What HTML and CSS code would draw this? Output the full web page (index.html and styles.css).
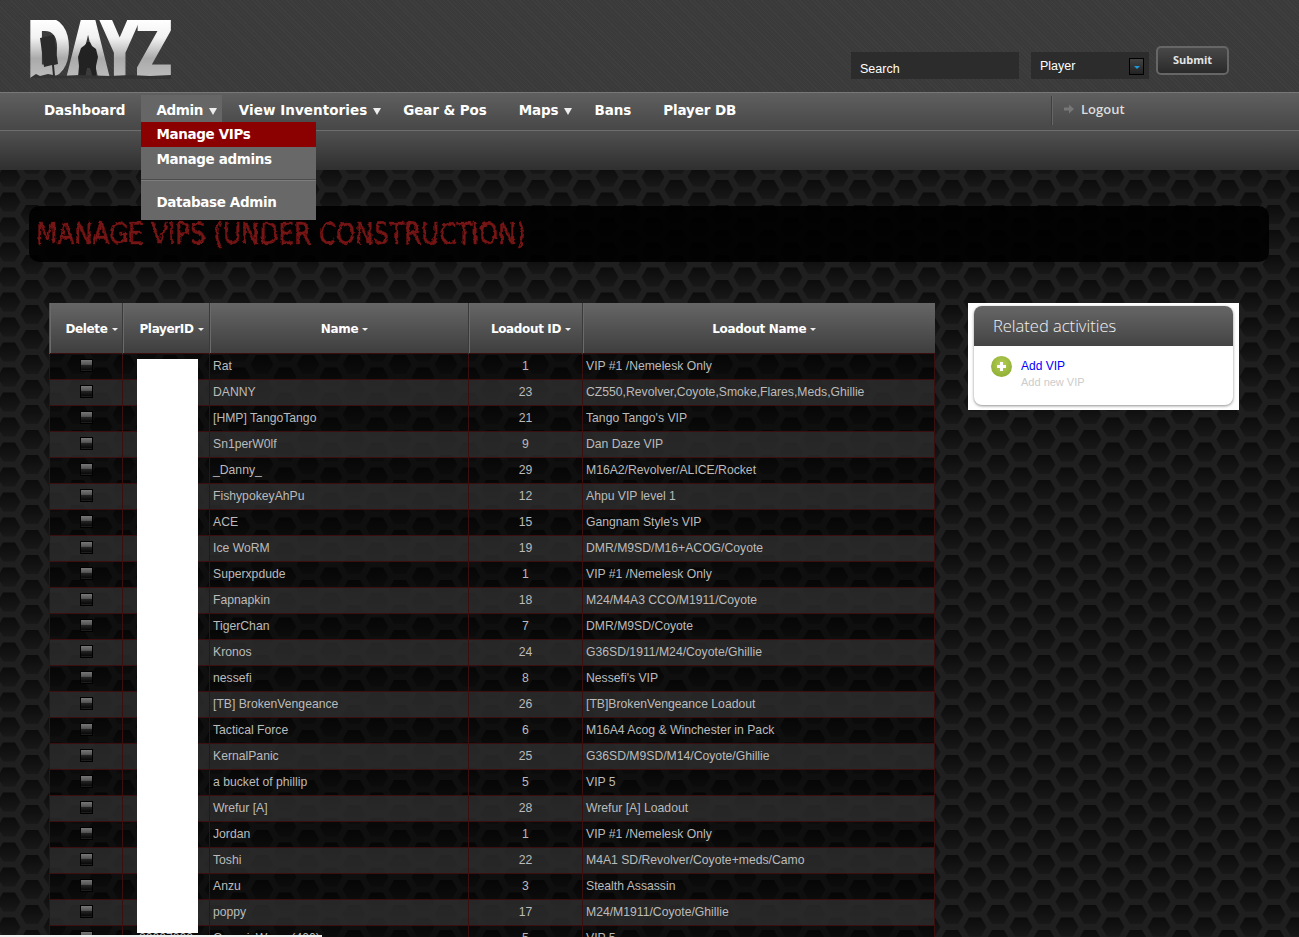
FILE: index.html
```html
<!DOCTYPE html>
<html lang="en">
<head>
    <meta charset="UTF-8">
    <title>DayZ - Manage VIPs</title>
    <link rel="stylesheet" href="styles.css">
</head>
<body>
<div class="page">
    <svg class="filters" width="0" height="0">
        <filter id="rough" x="-2%" y="-20%" width="104%" height="140%">
            <feTurbulence type="fractalNoise" baseFrequency="0.2" numOctaves="2" seed="4"/>
            <feDisplacementMap in="SourceGraphic" scale="5"/>
        </filter>
    </svg>

    <header class="top">
        <div class="logo">
            <span class="logo-text">DAYZ</span>
            <svg class="logo-art" width="141" height="59" viewBox="0 0 141 59">
                <path d="M10 18l14-3 4 29-4 1 1 11h-2l-1-11-8 2z" fill="#2b2b2b"/>
                <path d="M48 58l1-12-1-9 3-9 4-3 2-3 3 0 2 4 4 3 2 8-2 9 0 12h-3l-3-10-3 0-2 10z" fill="#222"/>
                <path d="M0 58l6-4 4 2 8-2 10 2 22-1 30 1 20-1 20 1 21-1v4z" fill="#333"/>
            </svg>
        </div>
        <form class="search">
            <input class="search-input" type="text" value="Search">
            <div class="search-select">
                <span>Player</span>
                <span class="select-btn"><i></i></span>
            </div>
            <button class="submit" type="button">Submit</button>
        </form>
    </header>

    <nav class="mainnav">
        <ul>
            <li class="nav-first"><a href="#">Dashboard</a></li>
            <li class="open has-sub">
                <a class="tight" href="#">Admin</a><i class="arrow"></i>
                <div class="dropdown">
                    <a class="active" href="#">Manage VIPs</a>
                    <a href="#">Manage admins</a>
                    <hr>
                    <a href="#">Database Admin</a>
                </div>
            </li>
            <li class="has-sub"><a class="wide" href="#">View Inventories</a><i class="arrow"></i></li>
            <li><a href="#">Gear &amp; Pos</a></li>
            <li class="has-sub"><a href="#">Maps</a><i class="arrow"></i></li>
            <li><a href="#">Bans</a></li>
            <li><a href="#">Player DB</a></li>
        </ul>
        <a class="logout" href="#">
            <svg width="10" height="10" viewBox="0 0 10 10"><path d="M0 3.5h5V0.5L10 5 5 9.500V6.500H0z" fill="#777"/></svg>
            Logout
        </a>
    </nav>
    <div class="subnav"></div>

    <div class="titlebar"><h1>MANAGE VIPS (UNDER CONSTRUCTION)</h1></div>

    <div class="content">
        <div class="table-wrap">
            <table class="vips">
                <thead>
                    <tr>
                        <th class="c-del">Delete<i class="caret"></i></th>
                        <th class="c-id">PlayerID<i class="caret"></i></th>
                        <th class="c-name">Name<i class="caret"></i></th>
                        <th class="c-lid">Loadout ID<i class="caret"></i></th>
                        <th>Loadout Name<i class="caret"></i></th>
                    </tr>
                </thead>
                <tbody>
                    <tr><td class="mid"><i class="check"></i></td><td></td><td>Rat</td><td class="mid">1</td><td>VIP #1 /Nemelesk Only</td></tr>
                    <tr><td class="mid"><i class="check"></i></td><td></td><td>DANNY</td><td class="mid">23</td><td>CZ550,Revolver,Coyote,Smoke,Flares,Meds,Ghillie</td></tr>
                    <tr><td class="mid"><i class="check"></i></td><td></td><td>[HMP] TangoTango</td><td class="mid">21</td><td>Tango Tango's VIP</td></tr>
                    <tr><td class="mid"><i class="check"></i></td><td></td><td>Sn1perW0lf</td><td class="mid">9</td><td>Dan Daze VIP</td></tr>
                    <tr><td class="mid"><i class="check"></i></td><td></td><td>_Danny_</td><td class="mid">29</td><td>M16A2/Revolver/ALICE/Rocket</td></tr>
                    <tr><td class="mid"><i class="check"></i></td><td></td><td>FishypokeyAhPu</td><td class="mid">12</td><td>Ahpu VIP level 1</td></tr>
                    <tr><td class="mid"><i class="check"></i></td><td></td><td>ACE</td><td class="mid">15</td><td>Gangnam Style's VIP</td></tr>
                    <tr><td class="mid"><i class="check"></i></td><td></td><td>Ice WoRM</td><td class="mid">19</td><td>DMR/M9SD/M16+ACOG/Coyote</td></tr>
                    <tr><td class="mid"><i class="check"></i></td><td></td><td>Superxpdude</td><td class="mid">1</td><td>VIP #1 /Nemelesk Only</td></tr>
                    <tr><td class="mid"><i class="check"></i></td><td></td><td>Fapnapkin</td><td class="mid">18</td><td>M24/M4A3 CCO/M1911/Coyote</td></tr>
                    <tr><td class="mid"><i class="check"></i></td><td></td><td>TigerChan</td><td class="mid">7</td><td>DMR/M9SD/Coyote</td></tr>
                    <tr><td class="mid"><i class="check"></i></td><td></td><td>Kronos</td><td class="mid">24</td><td>G36SD/1911/M24/Coyote/Ghillie</td></tr>
                    <tr><td class="mid"><i class="check"></i></td><td></td><td>nessefi</td><td class="mid">8</td><td>Nessefi's VIP</td></tr>
                    <tr><td class="mid"><i class="check"></i></td><td></td><td>[TB] BrokenVengeance</td><td class="mid">26</td><td>[TB]BrokenVengeance Loadout</td></tr>
                    <tr><td class="mid"><i class="check"></i></td><td></td><td>Tactical Force</td><td class="mid">6</td><td>M16A4 Acog &amp; Winchester in Pack</td></tr>
                    <tr><td class="mid"><i class="check"></i></td><td></td><td>KernalPanic</td><td class="mid">25</td><td>G36SD/M9SD/M14/Coyote/Ghillie</td></tr>
                    <tr><td class="mid"><i class="check"></i></td><td></td><td>a bucket of phillip</td><td class="mid">5</td><td>VIP 5</td></tr>
                    <tr><td class="mid"><i class="check"></i></td><td></td><td>Wrefur [A]</td><td class="mid">28</td><td>Wrefur [A] Loadout</td></tr>
                    <tr><td class="mid"><i class="check"></i></td><td></td><td>Jordan</td><td class="mid">1</td><td>VIP #1 /Nemelesk Only</td></tr>
                    <tr><td class="mid"><i class="check"></i></td><td></td><td>Toshi</td><td class="mid">22</td><td>M4A1 SD/Revolver/Coyote+meds/Camo</td></tr>
                    <tr><td class="mid"><i class="check"></i></td><td></td><td>Anzu</td><td class="mid">3</td><td>Stealth Assassin</td></tr>
                    <tr><td class="mid"><i class="check"></i></td><td></td><td>poppy</td><td class="mid">17</td><td>M24/M1911/Coyote/Ghillie</td></tr>
                    <tr><td class="mid"><i class="check"></i></td><td class="mid">20007000</td><td>GenericWorm (400)</td><td class="mid">5</td><td>VIP 5</td></tr>
                </tbody>
            </table>
            <div class="redact"></div>
        </div>

        <aside class="related">
            <div class="related-card">
                <h2>Related activities</h2>
                <div class="related-body">
                    <span class="plus"></span>
                    <div>
                        <a href="#">Add VIP</a>
                        <p>Add new VIP</p>
                    </div>
                </div>
            </div>
        </aside>
    </div>
    <div class="bottom-strip"></div>
</div>
</body>
</html>
```
FILE: styles.css
```css
html, body {
    margin: 0;
    padding: 0;
    height: 937px;
    overflow: hidden;
}

body {
    font-family: "Liberation Sans", Arial, sans-serif;
    font-size: 12.200px;
    color: #bbb;
    background-color: #1f1f1f;
    background-image: url("data:image/svg+xml,%3Csvg xmlns='http://www.w3.org/2000/svg' width='46' height='25'%3E%3Cdefs%3E%3ClinearGradient id='g' x1='0' y1='0' x2='0' y2='1'%3E%3Cstop offset='0' stop-color='%230c0c0c'/%3E%3Cstop offset='1' stop-color='%23181818'/%3E%3C/linearGradient%3E%3Cpath id='h' d='M-6-9.500H6L11.500 0 6 9.500H-6L-11.500 0z' fill='url(%23g)'/%3E%3C/defs%3E%3Cuse href='%23h' x='9' y='2'/%3E%3Cuse href='%23h' x='9' y='27'/%3E%3Cuse href='%23h' x='55' y='2'/%3E%3Cuse href='%23h' x='55' y='27'/%3E%3Cuse href='%23h' x='32' y='14.500'/%3E%3C/svg%3E");
}

.page {
    position: relative;
    height: 937px;
    overflow: hidden;
}

.filters {
    position: absolute;
}

/* header */
.top {
    display: flex;
    justify-content: space-between;
    height: 92px;
    background-color: #3a3a3a;
    background-image: repeating-linear-gradient(45deg, rgba(255,255,255,.025) 0 1px, transparent 1px 3px);
}

.logo {
    position: relative;
    width: 141px;
    height: 59px;
    margin: 20px 0 0 30px;
}

.logo-text {
    display: inline-block;
    margin-left: -4px;
    font-family: "DejaVu Sans", sans-serif;
    font-weight: bold;
    font-size: 80px;
    line-height: 59px;
    letter-spacing: -6px;
    transform: scaleX(.68);
    transform-origin: 0 0;
    background: linear-gradient(#fff 0, #f2f2f2 30%, #aaa 65%, #bdbdbd 100%);
    -webkit-background-clip: text;
    background-clip: text;
    color: transparent;
    -webkit-text-stroke: 2px transparent;
}

.logo-art {
    position: absolute;
    left: 0;
    top: 0;
}

.search {
    display: flex;
    align-items: flex-start;
    margin: 46px 70px 0 0;
}

.search-input {
    box-sizing: border-box;
    width: 168px;
    height: 27px;
    margin-top: 6px;
    padding: 7px 9px 0;
    border: 0;
    background: #2c2c2c;
    color: #fff;
    font-family: "Liberation Sans", Arial, sans-serif;
    font-size: 12.500px;
}

.search-select {
    box-sizing: border-box;
    display: flex;
    justify-content: space-between;
    align-items: center;
    width: 118px;
    height: 27px;
    margin: 6px 7px 0 12px;
    padding: 0 5px 0 9px;
    background: #2c2c2c;
    color: #fff;
    font-size: 12.500px;
}

.select-btn {
    box-sizing: border-box;
    display: flex;
    align-items: center;
    justify-content: center;
    width: 15px;
    height: 17px;
    margin-top: 1px;
    border: 1px solid #000;
    background: linear-gradient(#444, #222);
}

.select-btn i {
    margin-top: 3px;
    border-top: 3px solid #1e9ade;
    border-left: 3px solid transparent;
    border-right: 3px solid transparent;
}

.submit {
    box-sizing: border-box;
    width: 73px;
    height: 29px;
    padding: 0 0 2px;
    border: 2px solid #666;
    border-radius: 5px;
    background: linear-gradient(#484848, #2a2a2a);
    color: #e4e4e4;
    font-family: "Open Sans", sans-serif;
    font-size: 11px;
    font-weight: 700;
}

/* nav */
.mainnav {
    display: flex;
    justify-content: space-between;
    height: 37px;
    border-top: 1px solid #777;
    background: linear-gradient(#5f5f5f, #474747);
}

.mainnav ul {
    display: flex;
    gap: 2px;
    margin: 0;
    padding: 2px 0 0 29px;
    list-style: none;
    font-family: "DejaVu Sans", Verdana, sans-serif;
    font-weight: bold;
    font-size: 13.500px;
    letter-spacing: -.1px;
}

.mainnav li {
    position: relative;
    height: 27px;
    padding: 5px 15px 0;
    box-sizing: border-box;
    line-height: 20px;
    white-space: nowrap;
}

.mainnav li.has-sub {
    padding-right: 5px;
}

.mainnav li.nav-first {
    padding-right: 14px;
}

.mainnav li.open {
    background: #666;
}

.mainnav a {
    color: #fff;
    text-decoration: none;
}

.mainnav a.tight {
    letter-spacing: -.4px;
}

.mainnav a.wide {
    letter-spacing: .05px;
}

.arrow {
    display: inline-block;
    margin-left: 6px;
    border-top: 7px solid #eee;
    border-left: 4.500px solid transparent;
    border-right: 4.500px solid transparent;
}

.dropdown {
    position: absolute;
    z-index: 5;
    left: 0;
    top: 27px;
    width: 175px;
    height: 98px;
    background: #686868;
    letter-spacing: -.35px;
}

.dropdown a {
    display: block;
    height: 25px;
    padding-left: 15px;
    line-height: 25px;
}

.dropdown a.active {
    background: #8b0000;
}

.dropdown hr {
    height: 1px;
    margin: 7px 0 9px;
    border: 0;
    border-top: 1px solid #4c4c4c;
    background: #7c7c7c;
}

.logout {
    box-sizing: border-box;
    display: flex;
    align-items: center;
    gap: 7px;
    width: 248px;
    height: 29px;
    margin-top: 3px;
    padding: 0 0 3px 12px;
    border-left: 1px solid #3f3f3f;
    box-shadow: inset 1px 0 0 #666;
    font-family: "Open Sans", sans-serif;
    font-size: 13px;
    font-weight: 600;
}

.mainnav .logout {
    color: #ddd;
}

.subnav {
    height: 39px;
    border-top: 1px solid #6e6e6e;
    background: linear-gradient(#505050, #2f2f2f);
}

/* title */
.titlebar {
    height: 56px;
    margin: 36px 30px 41px 29px;
    border-radius: 10px;
    background: rgba(0, 0, 0, .88);
}

.titlebar h1 {
    margin: 0;
    padding: 13px 0 0 8px;
    font-family: "Liberation Sans Narrow", "DejaVu Sans Condensed", sans-serif;
    font-weight: normal;
    font-size: 30px;
    line-height: 30px;
    color: #741414;
    -webkit-text-stroke: .6px #741414;
    white-space: nowrap;
    transform: scaleX(.91);
    transform-origin: 0 0;
    filter: url(#rough);
}

/* content */
.content {
    display: flex;
    align-items: flex-start;
    gap: 33px;
    padding-left: 49px;
}

.table-wrap {
    position: relative;
    width: 886px;
}

.vips {
    width: 886px;
    border-collapse: collapse;
    table-layout: fixed;
}

.vips th {
    box-sizing: border-box;
    height: 50px;
    padding: 2px 0 0 11px;
    border-right: 1px solid #3a3a3a;
    box-shadow: inset 1px 0 0 #6a6a6a;
    background: linear-gradient(#666, #3e3e3e);
    color: #fff;
    font-family: "DejaVu Sans", Verdana, sans-serif;
    font-size: 12px;
    letter-spacing: -.35px;
    white-space: nowrap;
}

.vips th:first-child {
    border-left: 1px solid #555;
}

.vips th:last-child {
    border-right: 0;
}

.c-del { width: 73px; }
.c-id { width: 87px; }
.c-name { width: 259px; }
.c-lid { width: 114px; }

.caret {
    display: inline-block;
    margin: 0 0 2px 4px;
    border-top: 3px solid #eee;
    border-left: 3px solid transparent;
    border-right: 3px solid transparent;
}

.vips td {
    box-sizing: border-box;
    height: 26px;
    padding: 0 3px 1px;
    border: 1px solid #3b0f0f;
    white-space: nowrap;
}

.vips tbody tr:nth-child(odd) {
    background: rgba(0, 0, 0, .5);
}

.vips tbody tr:nth-child(even) {
    background: rgba(42, 42, 42, .85);
}

.mid {
    text-align: center;
}

.check {
    box-sizing: border-box;
    display: block;
    width: 13px;
    height: 13px;
    margin: 0 auto;
    border: 1px solid #000;
    background: linear-gradient(#777, #555 40%, #222 50%, #0a0a0a 88%, #2a2a2a);
}

.redact {
    position: absolute;
    left: 88px;
    top: 56px;
    width: 61px;
    height: 574px;
    background: #fff;
}

/* related box */
.related {
    box-sizing: border-box;
    width: 271px;
    height: 107px;
    padding: 3px 6px 0;
    background: #fff;
}

.related-card {
    height: 99px;
    border-radius: 8px;
    background: #fff;
    box-shadow: 0 1px 3px rgba(0, 0, 0, .45);
    overflow: hidden;
}

.related-card h2 {
    height: 40px;
    margin: 0;
    padding-left: 19px;
    background: linear-gradient(#666, #444);
    color: #f2f2f2;
    font-family: "Open Sans", sans-serif;
    font-size: 16.500px;
    font-weight: 300;
    line-height: 40px;
}

.related-body {
    display: flex;
    gap: 9px;
    padding: 10px 0 0 17px;
}

.related-body a {
    display: block;
    margin-top: 3px;
    color: #00f;
    font-size: 12px;
    line-height: 14px;
    text-decoration: none;
}

.related-body p {
    margin: 3px 0 0;
    color: #ccc;
    font-size: 11px;
    line-height: 13px;
}

.plus {
    position: relative;
    width: 21px;
    height: 21px;
    border-radius: 50%;
    background: radial-gradient(circle at 50% 40%, #b5cf55, #84a52c);
}

.plus::before,
.plus::after {
    content: "";
    position: absolute;
    background: #fff;
}

.plus::before {
    left: 6px;
    top: 9px;
    width: 9px;
    height: 3px;
}

.plus::after {
    left: 9px;
    top: 6px;
    width: 3px;
    height: 9px;
}

.bottom-strip {
    position: absolute;
    left: 0;
    top: 935px;
    width: 322px;
    height: 2px;
    background: #f0f0f0;
}
```
